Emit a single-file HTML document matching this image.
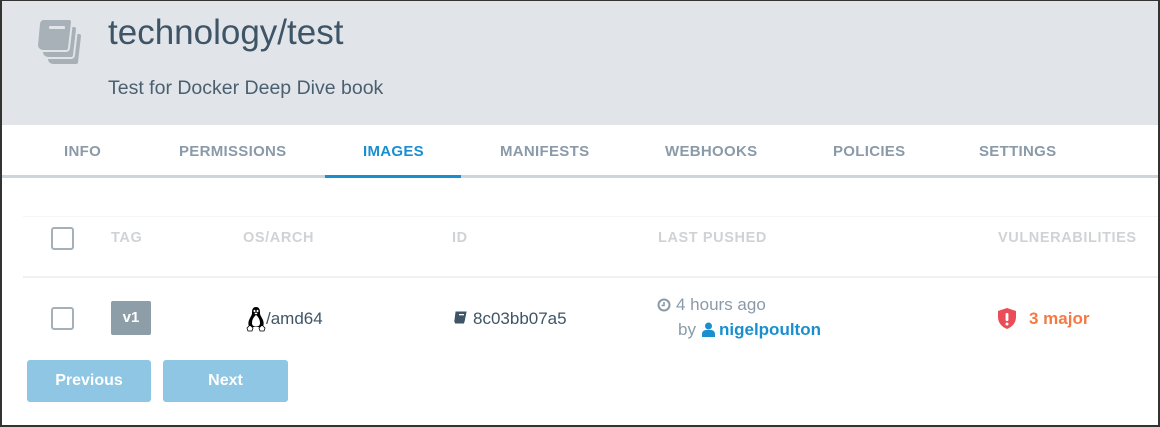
<!DOCTYPE html>
<html><head><style>
*{margin:0;padding:0;box-sizing:border-box}
body{width:1160px;height:427px;overflow:hidden;background:#fff;font-family:"Liberation Sans",sans-serif;position:relative}
.frame{position:absolute;inset:0;border:2px solid #333;border-top-width:1px;pointer-events:none;z-index:9}
.hdr{position:absolute;left:0;top:0;width:1160px;height:125px;background:#e1e5e9}
.t{position:absolute;white-space:nowrap}
.tab{position:absolute;top:143px;font-size:15px;font-weight:bold;color:#8a9aa8;letter-spacing:.3px}
.th{position:absolute;top:230px;font-size:14.5px;font-weight:bold;color:#cfd3d6;letter-spacing:.6px}
.cb{position:absolute;left:51px;width:23px;height:23px;border:2px solid #a6b0b9;border-radius:3px;background:#fff}
.btn{position:absolute;top:360px;height:42px;background:#8ec6e4;border-radius:3px;color:#fff;font-weight:bold;font-size:16px;text-align:center;line-height:42px}
</style></head><body>
<div class="hdr"></div>
<svg class="t" style="left:36px;top:18px" width="50" height="50" viewBox="0 0 50 50">
<defs><path id="bk" d="M9 1 h24 a3 3 0 0 1 3 3 l-3 26 a3 3 0 0 1 -3 3 h-23 a6 6 0 0 1 -6 -6 l2 -21 a5 5 0 0 1 6 -5z"/></defs>
<use href="#bk" transform="translate(10,14)" fill="#a8b0b8" stroke="#e1e5e9" stroke-width="2"/>
<use href="#bk" transform="translate(5,7)" fill="#a8b0b8" stroke="#e1e5e9" stroke-width="2"/>
<use href="#bk" fill="#a8b0b8" stroke="#e1e5e9" stroke-width="2"/>
<rect x="13" y="8" width="16" height="3" rx="1" fill="#e1e5e9"/>
</svg>
<div class="t" style="left:108px;top:13px;font-size:35px;color:#3e5567">technology/test</div>
<div class="t" style="left:108px;top:77px;font-size:19.5px;color:#4a5f70">Test for Docker Deep Dive book</div>
<div class="tab" style="left:64px">INFO</div>
<div class="tab" style="left:179px">PERMISSIONS</div>
<div class="tab" style="left:363px;color:#1a8fd0">IMAGES</div>
<div class="tab" style="left:500px">MANIFESTS</div>
<div class="tab" style="left:665px">WEBHOOKS</div>
<div class="tab" style="left:833px">POLICIES</div>
<div class="tab" style="left:979px">SETTINGS</div>
<div class="t" style="left:0;top:175px;width:1158px;height:3px;background:#cdd5db"></div>
<div class="t" style="left:325px;top:175px;width:136px;height:3px;background:#1a8fd0"></div>
<div class="t" style="left:23px;top:216px;width:1135px;height:1px;background:#f4f5f6"></div>
<div class="t" style="left:23px;top:276px;width:1135px;height:2px;background:#f0f1f2"></div>
<div class="cb" style="top:227px"></div>
<div class="th" style="left:111px">TAG</div>
<div class="th" style="left:243px">OS/ARCH</div>
<div class="th" style="left:452px">ID</div>
<div class="th" style="left:658px">LAST PUSHED</div>
<div class="th" style="left:998px">VULNERABILITIES</div>
<div class="cb" style="top:307px"></div>
<div class="t" style="left:111px;top:301px;width:40px;height:34px;background:#8e9ea9;border-radius:2px;color:#fff;font-weight:bold;font-size:15px;text-align:center;line-height:34px">v1</div>
<svg class="t" style="left:246px;top:306px" width="20" height="26" viewBox="0 0 20 26">
<path d="M10 1 C6.5 1 6 4 6 7 C6 9 5 10 3.5 13 C2 16 2 19 3.5 21 L16.5 21 C18 19 18 16 16.5 13 C15 10 14 9 14 7 C14 4 13.5 1 10 1Z" fill="#000"/>
<path d="M10 9 C7.5 11 6 14 6 17 C6 19 7 20.5 10 20.5 C13 20.5 14 19 14 17 C14 14 12.5 11 10 9Z" fill="#fff"/>
<ellipse cx="8.5" cy="5" rx="1" ry="1.3" fill="#fff"/><ellipse cx="11.5" cy="5" rx="1" ry="1.3" fill="#fff"/>
<path d="M8.3 7.3 L10 6.5 L11.7 7.3 L10 8.5Z" fill="#fff"/>
<path d="M1 22 L4 19 L7 22 L6 25 L2 25Z M19 22 L16 19 L13 22 L14 25 L18 25Z" fill="#fff" stroke="#000" stroke-width=".8"/>
</svg>
<div class="t" style="left:266px;top:309px;font-size:17px;color:#3e5567">/amd64</div>
<svg class="t" style="left:453px;top:311px" width="14" height="14" viewBox="0 0 14 14"><path d="M3 1 h10 l-2 10 h-9 a2 2 0 0 1 0 -2 z M2 12 h9" fill="#3e5567" stroke="#3e5567"/><rect x="6" y="3" width="5" height="1.3" fill="#fff"/></svg>
<div class="t" style="left:473px;top:309px;font-size:17px;color:#3e5567">8c03bb07a5</div>
<svg class="t" style="left:657px;top:298px" width="14" height="14" viewBox="0 0 14 14"><circle cx="7" cy="7" r="5.5" fill="none" stroke="#8a9aa8" stroke-width="2"/><path d="M7 4 v3.5 h-2.5" fill="none" stroke="#8a9aa8" stroke-width="1.6"/></svg>
<div class="t" style="left:676px;top:295px;font-size:17px;color:#8a9aa8">4 hours ago</div>
<div class="t" style="left:678px;top:320px;font-size:17px;color:#8a9aa8">by</div>
<svg class="t" style="left:702px;top:322px" width="13" height="15" viewBox="0 0 13 15"><circle cx="6.5" cy="4" r="3.5" fill="#1a8fd0"/><path d="M0 15 v-3 a4 4 0 0 1 4 -4 h5 a4 4 0 0 1 4 4 v3z" fill="#1a8fd0"/></svg>
<div class="t" style="left:719px;top:320px;font-size:17px;color:#1a8fd0;font-weight:bold">nigelpoulton</div>
<svg class="t" style="left:997px;top:307px" width="20" height="23" viewBox="0 0 20 23"><path d="M10 1 L19 4 V10 C19 16 15 20 10 22 C5 20 1 16 1 10 V4Z" fill="#ea4d58"/><rect x="8.6" y="6" width="2.8" height="8" rx="1" fill="#fff"/><circle cx="10" cy="17" r="1.5" fill="#fff"/></svg>
<div class="t" style="left:1029px;top:309px;font-size:17px;color:#f47a44;font-weight:bold">3 major</div>
<div class="btn" style="left:27px;width:124px">Previous</div>
<div class="btn" style="left:163px;width:125px">Next</div>
<div class="frame"></div>
</body></html>
